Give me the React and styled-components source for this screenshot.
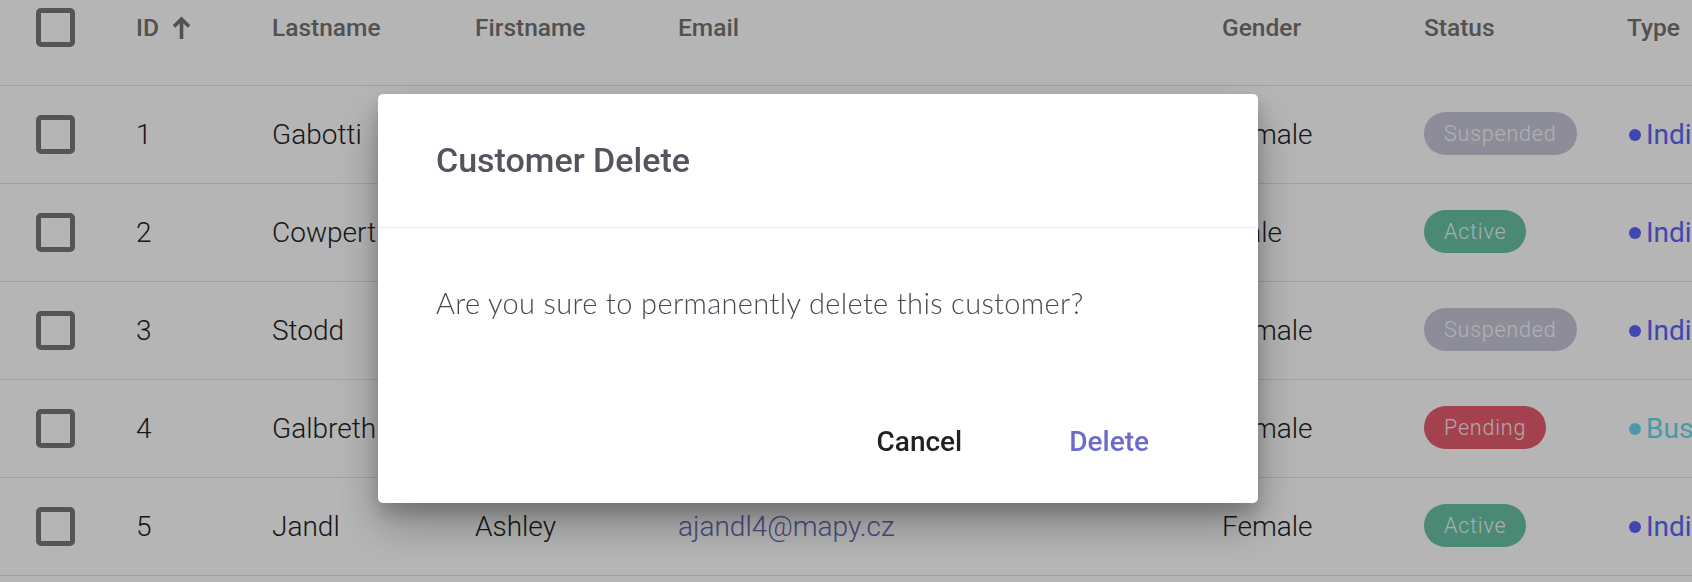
import React from 'react'
import styled, { createGlobalStyle } from 'styled-components'

const GlobalStyle = createGlobalStyle`
  html, body {
    margin: 0;
    padding: 0;
    background: #ffffff;
    overflow: hidden;
  }
  body {
    font-family: Roboto, "Liberation Sans", Arial, sans-serif;
  }
`

// lastname, firstname, email, gender, status, type
const customers = [
  { id: 1, lastname: 'Gabotti', firstname: 'Marlene', email: 'mgabotti0@hugedomains.com', gender: 'Female', status: 'Suspended', type: 'Individual' },
  { id: 2, lastname: 'Cowperthwaite', firstname: 'Derek', email: 'dcowperthwaite1@jimdo.com', gender: 'Male', status: 'Active', type: 'Individual' },
  { id: 3, lastname: 'Stodd', firstname: 'Nerta', email: 'nstodd2@google.ru', gender: 'Female', status: 'Suspended', type: 'Individual' },
  { id: 4, lastname: 'Galbreth', firstname: 'Amelia', email: 'agalbreth3@ning.com', gender: 'Female', status: 'Pending', type: 'Business' },
  { id: 5, lastname: 'Jandl', firstname: 'Ashley', email: 'ajandl4@mapy.cz', gender: 'Female', status: 'Active', type: 'Individual' },
]

const statusColors = {
  Suspended: '#c7c7d9',
  Active: '#68c2a5',
  Pending: '#e65e6f',
}

const typeColors = {
  Individual: '#5965f8',
  Business: '#68d9ed',
}

const App = () => {
  return (
    <>
      <GlobalStyle />
      <Table>
        <HeaderRow>
          <CheckCell>
            <Checkbox />
          </CheckCell>
          <HeadCell>
            ID
            <SortArrow viewBox="0 0 19 23">
              <path d="M2 10.5 L9.5 3 L17 10.5 M9.5 3.5 V23" />
            </SortArrow>
          </HeadCell>
          <HeadCell>Lastname</HeadCell>
          <HeadCell>Firstname</HeadCell>
          <HeadCell>Email</HeadCell>
          <HeadCell>Gender</HeadCell>
          <HeadCell>Status</HeadCell>
          <HeadCell>Type</HeadCell>
        </HeaderRow>
        {customers.map((c) => (
          <Row key={c.id}>
            <CheckCell>
              <Checkbox />
            </CheckCell>
            <Cell>{c.id}</Cell>
            <Cell>{c.lastname}</Cell>
            <Cell>{c.firstname}</Cell>
            <EmailCell>{c.email}</EmailCell>
            <Cell>{c.gender}</Cell>
            <Cell>
              <StatusChip color={statusColors[c.status]}>{c.status}</StatusChip>
            </Cell>
            <TypeCell color={typeColors[c.type]}>
              <Dot color={typeColors[c.type]} />
              {c.type}
            </TypeCell>
          </Row>
        ))}
      </Table>

      <Overlay>
        <Dialog>
          <DialogTitle>Customer Delete</DialogTitle>
          <DialogBody>Are you sure to permanently delete this customer?</DialogBody>
          <DialogActions>
            <TextButton>Cancel</TextButton>
            <TextButton primary>Delete</TextButton>
          </DialogActions>
        </Dialog>
      </Overlay>
    </>
  )
}

const Table = styled.div`
  display: flex;
  flex-direction: column;
  width: 1692px;
`
const Row = styled.div`
  display: grid;
  grid-template-columns: 136px 136px 203px 203px 544px 202px 203px 65px;
  align-items: center;
  height: 97px;
  border-bottom: 1px solid #e1e1e1;
`
const HeaderRow = styled(Row)`
  height: 77px;
  align-items: start;
  padding-top: 8px;
`
const CheckCell = styled.div`
  display: flex;
  align-items: center;
  padding-left: 36px;
  height: 39px;
`
const Checkbox = styled.span`
  display: block;
  box-sizing: border-box;
  width: 39px;
  height: 39px;
  border: 5px solid #787878;
  border-radius: 5px;
`
const HeadCell = styled.div`
  display: flex;
  align-items: center;
  height: 39px;
  font-size: 24.5px;
  font-weight: 500;
  color: #737373;
  white-space: nowrap;
`
const SortArrow = styled.svg`
  flex-shrink: 0;
  width: 19px;
  height: 23px;
  margin-left: 13px;
  fill: none;
  stroke: #737373;
  stroke-width: 3.6;
`
const Cell = styled.div`
  display: flex;
  align-items: center;
  font-size: 28px;
  font-weight: 300;
  color: #222222;
  white-space: nowrap;
`
const EmailCell = styled(Cell)`
  color: #6868b7;
`
const StatusChip = styled.span`
  display: inline-flex;
  align-items: center;
  height: 43px;
  margin-top: -3px;
  padding: 0 20px;
  border-radius: 22px;
  background: ${(props) => props.color};
  color: rgba(255, 255, 255, 0.9);
  font-size: 21.5px;
  font-weight: 300;
  letter-spacing: 0.8px;
`
const TypeCell = styled(Cell)`
  font-weight: 400;
  color: ${(props) => props.color};
`
const Dot = styled.span`
  flex-shrink: 0;
  width: 12px;
  height: 12px;
  border-radius: 50%;
  margin-left: 2px;
  margin-right: 5px;
  background: ${(props) => props.color};
`
const Overlay = styled.div`
  position: fixed;
  inset: 0;
  display: flex;
  align-items: flex-start;
  padding: 94px 0 0 378px;
  background: rgba(0, 0, 0, 0.29);
`
const Dialog = styled.div`
  display: flex;
  flex-direction: column;
  width: 880px;
  background: #ffffff;
  border-radius: 5px;
  box-shadow: 0 22px 46px rgba(0, 0, 0, 0.28), 0 10px 18px rgba(0, 0, 0, 0.18);
`
const DialogTitle = styled.h2`
  margin: 0;
  padding: 39px 58px 40px;
  font-size: 34px;
  font-weight: 500;
  line-height: 54px;
  color: #53555e;
  border-bottom: 1px solid #ebebf0;
`
const DialogBody = styled.p`
  margin: 0;
  padding: 54px 58px 0;
  font-family: Lato, "Open Sans", sans-serif;
  font-size: 29px;
  font-weight: 300;
  line-height: 42px;
  letter-spacing: 0.35px;
  color: #474852;
`
const DialogActions = styled.div`
  display: flex;
  justify-content: flex-end;
  gap: 79px;
  padding: 83px 95px 26px 0;
`
const TextButton = styled.button`
  all: unset;
  padding: 10px 14px;
  font-family: Roboto, "Liberation Sans", sans-serif;
  font-size: 28px;
  font-weight: 500;
  line-height: 50px;
  color: ${(props) => (props.primary ? '#6b6bcc' : '#222222')};
`

export default App
